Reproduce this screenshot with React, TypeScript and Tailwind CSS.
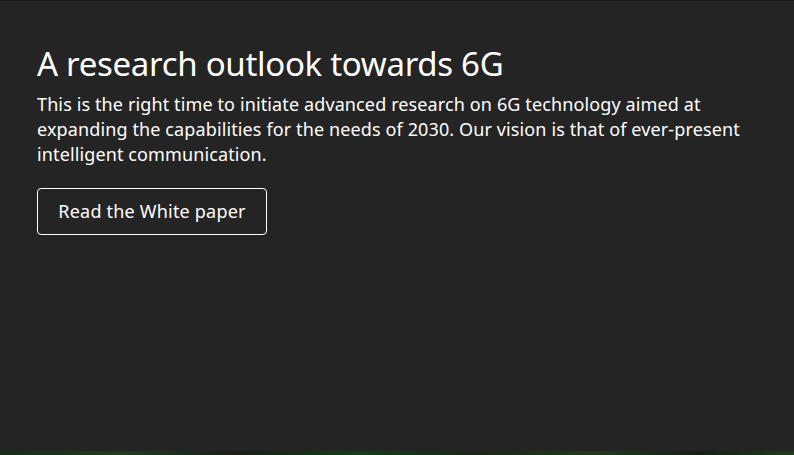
import React from "react";

const App = () => {
  return (
    <div className="w-[794px] h-[455px] flex flex-col bg-[#242424] overflow-hidden" style={{ fontFamily: "'Noto Sans', Lato, sans-serif" }}>
      <div className="flex-1 border-t border-[#1c1c1c] pl-[37px] pr-[30px] pt-[41px]">
        <h1 className="text-[33px] leading-[44px] text-white font-normal tracking-[-0.3px]">A research outlook towards 6G</h1>
        <p className="mt-[6px] text-[18px] leading-[25px] text-white max-w-[720px] tracking-[0.12px]">
          This is the right time to initiate advanced research on 6G technology aimed at expanding the capabilities
          for the needs of 2030. Our vision is that of ever-present intelligent communication.
        </p>
        <button className="mt-[21px] h-[47px] w-[230px] rounded-[4px] border border-white text-white text-[18px] tracking-[0.2px]">
          Read the White paper
        </button>
      </div>
      <div className="h-[4px] bg-[linear-gradient(90deg,#1b2a1b_0%,#1f3a22_15%,#1a1f18_30%,#123c1c_45%,#1c261a_60%,#20381f_75%,#172017_88%,#1e3a20_100%)]" />
    </div>
  );
};

export default App;
